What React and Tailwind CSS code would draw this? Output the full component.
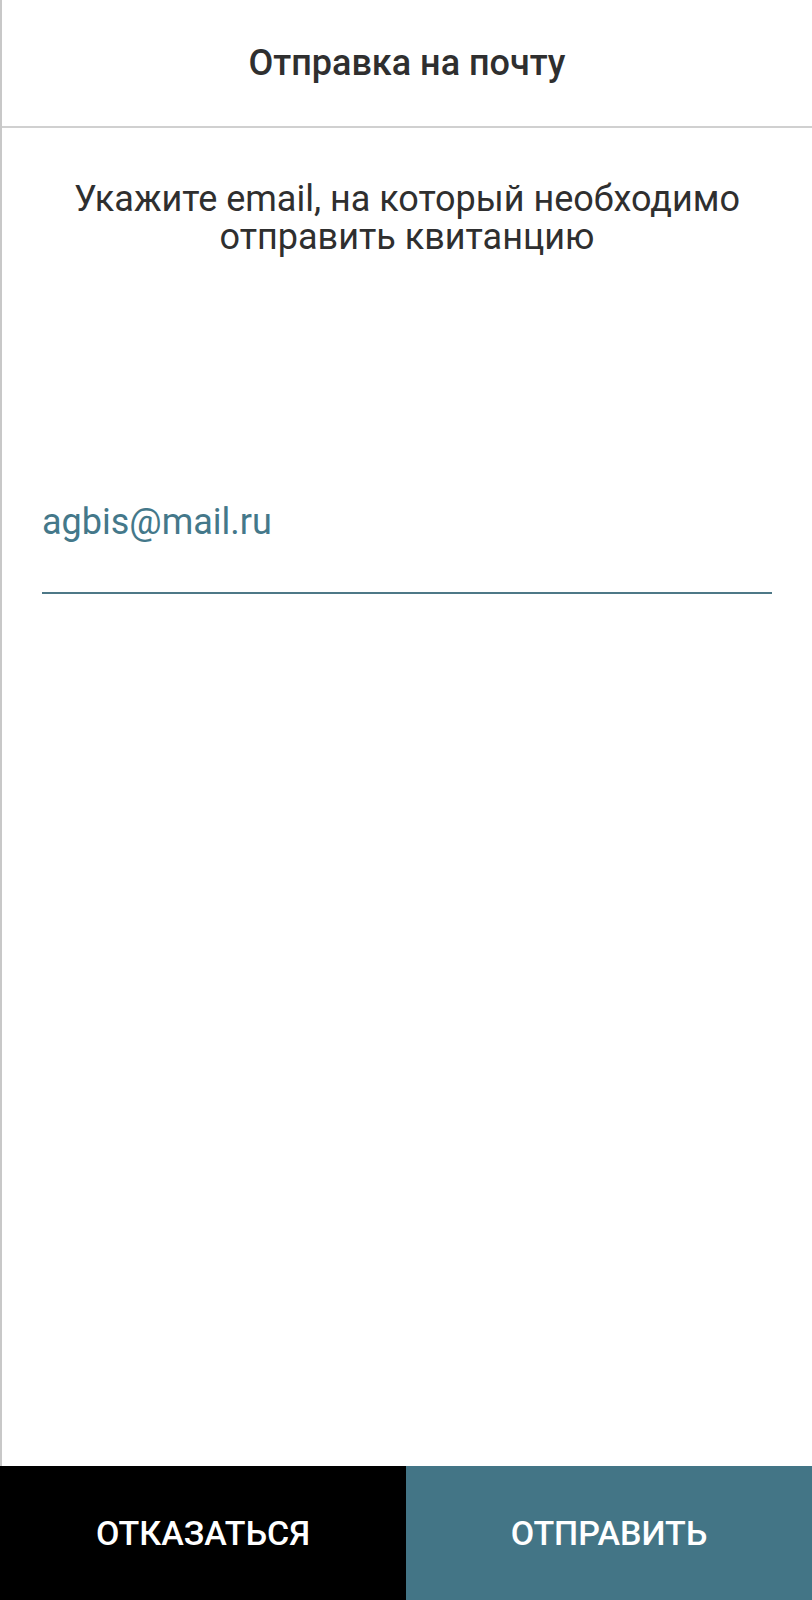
import React from 'react';

const font = { fontFamily: 'Roboto, "Noto Sans", sans-serif' };

export default function App() {
  return (
    <div className="flex h-[1600px] w-[812px] flex-col bg-white" style={font}>
      <div className="flex flex-1 flex-col border-l-2 border-[#c8c8c8]">
        <div className="flex h-[128px] items-center justify-center border-b-2 border-[#d0d0d0]">
          <h1 className="text-[36px] font-medium text-[#2f2f2f]">Отправка на почту</h1>
        </div>

        <p className="mt-[52px] px-8 text-center text-[36px] leading-[38px] text-[#2f2f2f]">
          Укажите email, на который необходимо
          <br />
          отправить квитанцию
        </p>

        <div className="mx-10 mt-[246px] border-b-2 border-[#4d7887] pb-[50px]">
          <span className="text-[36px] leading-[40px] text-[#44788a]">agbis@mail.ru</span>
        </div>
      </div>

      <div className="flex h-[134px]">
        <button className="flex-1 bg-black text-[34px] font-medium uppercase text-white">
          Отказаться
        </button>
        <button className="flex-1 bg-[#437586] text-[34px] font-medium uppercase text-white">
          Отправить
        </button>
      </div>
    </div>
  );
}
